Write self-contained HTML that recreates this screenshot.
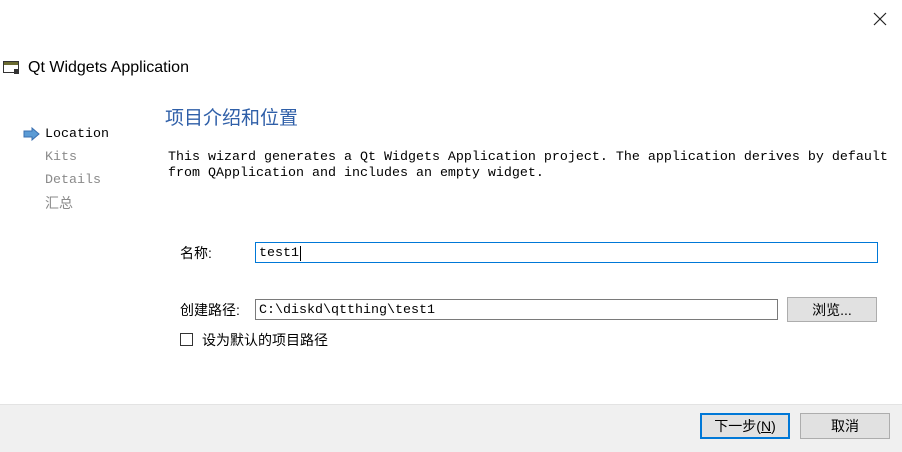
<!DOCTYPE html>
<html><head><meta charset="utf-8"><style>
body{margin:0;width:902px;height:451px;background:#fff;position:relative;overflow:hidden;font-family:"Liberation Mono","Noto Sans CJK SC",monospace;font-size:13.33px;color:#000}
.a{position:absolute;white-space:pre;line-height:16px}
.cj{font-family:"Liberation Sans","Noto Sans CJK SC",sans-serif}
.inp{position:absolute;border:1px solid #7a7a7a;background:#fff;box-sizing:border-box;padding:3px 3px 0;line-height:15px}
.btn{position:absolute;border:1px solid #adadad;background:#e1e1e1;box-sizing:border-box;text-align:center;font-family:"Liberation Sans","Noto Sans CJK SC",sans-serif;font-size:14px}
</style></head><body>
<svg style="position:absolute;left:873px;top:12px" width="14" height="14"><path d="M1 1L13 13M13 1L1 13" stroke="#222" stroke-width="1.2"/></svg>
<svg style="position:absolute;left:3px;top:61px" width="17" height="14"><rect x="0.5" y="0.5" width="15" height="11" fill="#fff" stroke="#333"/><rect x="1" y="1" width="14" height="3" fill="#6a6a30"/><rect x="11" y="8" width="5" height="5" fill="#333"/></svg>
<div class="a cj" style="left:28px;top:58px;font-size:16px;line-height:20px;color:#000">Qt Widgets Application</div>
<svg style="position:absolute;left:23px;top:127px" width="18" height="14"><path d="M1 4h8V1l7 6-7 6v-3H1z" fill="#5b9bd5" stroke="#3a6fb0"/></svg>
<div class="a" style="left:45px;top:127px">Location</div>
<div class="a" style="left:45px;top:150px;color:#8a8a8a">Kits</div>
<div class="a" style="left:45px;top:173px;color:#8a8a8a">Details</div>
<div class="a cj" style="left:45px;top:195px;color:#8a8a8a;font-size:14px">汇总</div>
<div class="a cj" style="left:165px;top:106px;font-size:19px;line-height:26px;color:#2f5fa8">项目介绍和位置</div>
<div class="a" style="left:168px;top:150px">This wizard generates a Qt Widgets Application project. The application derives by default
from QApplication and includes an empty widget.</div>
<div class="a cj" style="left:180px;top:245px;font-size:14px">名称:</div>
<div class="inp" style="left:255px;top:242px;width:623px;height:21px;border-color:#0078d7">test1<span style="border-left:1px solid #000;margin-left:1px"></span></div>
<div class="a cj" style="left:180px;top:302px;font-size:14px">创建路径:</div>
<div class="inp" style="left:255px;top:299px;width:523px;height:21px">C:\diskd\qtthing\test1</div>
<div class="btn" style="left:787px;top:297px;width:90px;height:25px;line-height:24px">浏览...</div>
<div style="position:absolute;left:180px;top:333px;width:13px;height:13px;border:1px solid #333;box-sizing:border-box;background:#fff"></div>
<div class="a cj" style="left:202px;top:332px;font-size:14px">设为默认的项目路径</div>
<div style="position:absolute;left:0;top:404px;width:902px;height:47px;background:#f0f0f0;border-top:1px solid #e3e3e3"></div>
<div class="btn" style="left:700px;top:413px;width:90px;height:26px;line-height:23px;border:2px solid #0078d7">下一步(<u>N</u>)</div>
<div class="btn" style="left:800px;top:413px;width:90px;height:26px;line-height:25px">取消</div>
</body></html>
